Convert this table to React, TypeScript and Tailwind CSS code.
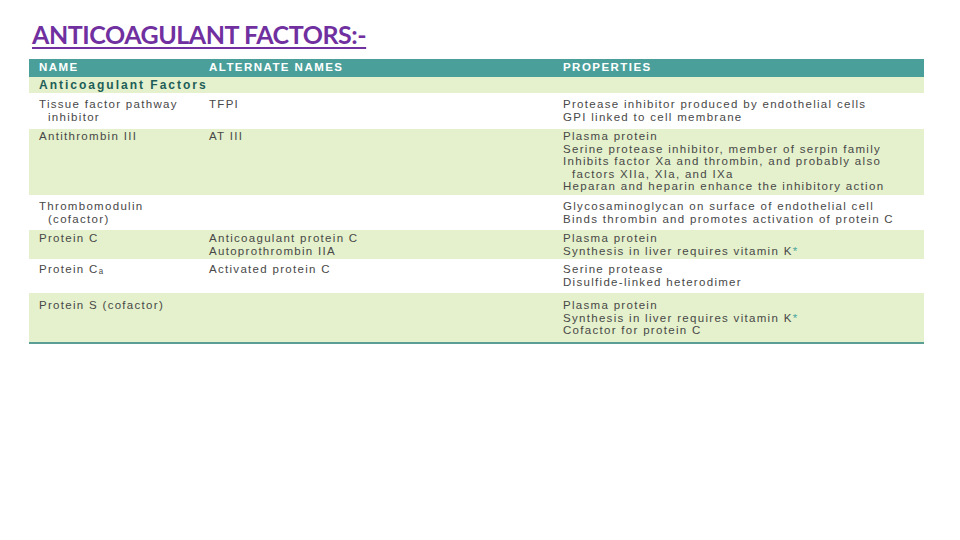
const ROWS = [
  {
    name: ["Tissue factor pathway", "\u00a0\u00a0inhibitor"],
    alt: ["TFPI"],
    props: ["Protease inhibitor produced by endothelial cells", "GPI linked to cell membrane"],
    green: false,
    h: "h-[36px] pt-[5px]",
  },
  {
    name: ["Antithrombin III"],
    alt: ["AT III"],
    props: [
      "Plasma protein",
      "Serine protease inhibitor, member of serpin family",
      "Inhibits factor Xa and thrombin, and probably also",
      "\u00a0\u00a0factors XIIa, XIa, and IXa",
      "Heparan and heparin enhance the inhibitory action",
    ],
    green: true,
    h: "h-[66px] pt-[1px]",
  },
  {
    name: ["Thrombomodulin", "\u00a0\u00a0(cofactor)"],
    alt: [],
    props: ["Glycosaminoglycan on surface of endothelial cell", "Binds thrombin and promotes activation of protein C"],
    green: false,
    h: "h-[35px] pt-[5px]",
  },
  {
    name: ["Protein C"],
    alt: ["Anticoagulant protein C", "Autoprothrombin IIA"],
    props: ["Plasma protein", "Synthesis in liver requires vitamin K*"],
    green: true,
    h: "h-[29px] pt-[2px]",
  },
  {
    name: ["Protein C\u2090"],
    alt: ["Activated protein C"],
    props: ["Serine protease", "Disulfide-linked heterodimer"],
    green: false,
    h: "h-[34px] pt-[4px]",
  },
  {
    name: ["Protein S (cofactor)"],
    alt: [],
    props: ["Plasma protein", "Synthesis in liver requires vitamin K*", "Cofactor for protein C"],
    green: true,
    h: "h-[49px] pt-[6px]",
  },
];

function Line({ text }: { text: string }) {
  if (text.endsWith("*")) {
    return (
      <div className="whitespace-nowrap">
        {text.slice(0, -1)}
        <span className="text-[#4aa6a0]">*</span>
      </div>
    );
  }
  return <div className="whitespace-nowrap">{text}</div>;
}

export default function App() {
  return (
    <div className="h-[540px] w-[960px] bg-white font-['Liberation_Sans',Arial,sans-serif]">
      <div className="pl-[32px] pt-[19px]">
        <h1 className="font-['Lato',sans-serif] text-[25px] font-bold leading-[30px] tracking-[-0.45px] text-[#7030a0] underline decoration-2 underline-offset-[3px]">
          ANTICOAGULANT FACTORS:-
        </h1>
      </div>

      <div className="ml-[29px] mt-[10px] w-[895px] border-b-2 border-[#5a9e96]">
        <div className="flex h-[18px] items-center bg-[#4b9f9b] text-[11.5px] font-bold tracking-[1.45px] text-white">
          <div className="w-[180px] pl-[10px]">NAME</div>
          <div className="w-[354px]">ALTERNATE NAMES</div>
          <div>PROPERTIES</div>
        </div>
        <div className="flex h-[16px] items-center bg-[#e4f1cc] pl-[10px] text-[12px] font-bold tracking-[2px] text-[#1d5e58]">
          Anticoagulant Factors
        </div>
        {ROWS.map((r, i) => (
          <div
            key={i}
            className={`flex ${r.h} text-[11.5px] leading-[12.6px] tracking-[1.3px] text-[#484848] ${
              r.green ? "bg-[#e4f1cc]" : "bg-white"
            }`}
          >
            <div className="w-[180px] pl-[10px]">
              {r.name.map((t, j) => (
                <Line key={j} text={t} />
              ))}
            </div>
            <div className="w-[354px]">
              {r.alt.map((t, j) => (
                <Line key={j} text={t} />
              ))}
            </div>
            <div>
              {r.props.map((t, j) => (
                <Line key={j} text={t} />
              ))}
            </div>
          </div>
        ))}
      </div>
    </div>
  );
}
